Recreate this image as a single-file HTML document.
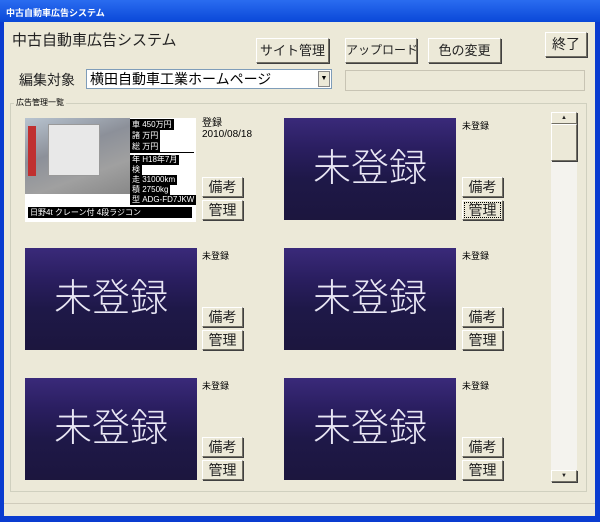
<!DOCTYPE html><html><head><meta charset="utf-8"><style>
*{margin:0;padding:0;box-sizing:border-box}
body{width:600px;height:522px;background:#0a3cd0;position:relative;overflow:hidden;font-family:"Liberation Sans","Noto Sans CJK JP",sans-serif;color:#000}
.a{position:absolute}
.title{left:0;top:0;width:600px;height:22px;background:linear-gradient(#2a6cf0,#0a48d8);color:#fff;font-size:9px;padding:6px 6px;font-weight:bold}
.client{left:4px;top:22px;width:591px;height:494px;background:#ece9d8}
.btn{position:absolute;background:#ece9d8;border:1px solid;border-color:#fff #716f64 #716f64 #fff;box-shadow:1px 1px 0 #404040;font-size:14px;text-align:center;line-height:18px;white-space:nowrap;color:#222}
.img{position:absolute;background:linear-gradient(#3a2a7a 0%,#2a1e60 30%,#1e1848 60%,#1c163e 100%);color:#e8e6f4;font-size:38px;font-weight:300;text-align:center;line-height:102px}
.lbl{position:absolute;font-size:10px}
.sb{position:absolute;font-size:8px;line-height:11px;white-space:nowrap}
.blk{background:#000;color:#fff;display:inline-block;padding:0 2px}
</style></head><body>
<div class="a title">中古自動車広告システム</div>
<div class="a client"></div>
<div class="a" style="left:12px;top:29px;font-size:15px;color:#222">中古自動車広告システム</div>
<div class="btn" style="left:256px;top:38px;width:73px;height:25px;line-height:23px;font-size:13px">サイト管理</div>
<div class="btn" style="left:345px;top:38px;width:72px;height:25px;line-height:23px;font-size:12px">アップロード</div>
<div class="btn" style="left:428px;top:38px;width:73px;height:25px;line-height:23px;font-size:13px">色の変更</div>
<div class="btn" style="left:545px;top:32px;width:42px;height:25px;line-height:23px">終了</div>
<div class="a" style="left:19px;top:70px;font-size:14px;color:#222">編集対象</div>
<div class="a" style="left:86px;top:69px;width:246px;height:20px;background:#fff;border:1px solid #7f9db9;font-size:14px;padding-left:3px;line-height:18px">横田自動車工業ホームページ</div>
<div class="a" style="left:318px;top:71px;width:12px;height:16px;background:#ece9d8;border:1px solid #888;font-size:7px;text-align:center;line-height:14px">▼</div>
<div class="a" style="left:345px;top:70px;width:240px;height:21px;border:1px solid #c8c4b4;background:#ece9d8"></div>
<div class="a" style="left:10px;top:103px;width:577px;height:389px;border:1px solid #d0d0bf"></div>
<div class="a" style="left:14px;top:97px;font-size:8px;background:#ece9d8;padding:0 2px">広告管理一覧</div>
<div class="a" style="left:25px;top:118px;width:171px;height:104px;background:#fff"></div>
<div class="a" style="left:25px;top:118px;width:105px;height:76px;background:linear-gradient(160deg,#b8c4d0,#8c9099 40%,#a0a0a0 70%,#888)"></div>
<div class="a" style="left:48px;top:124px;width:52px;height:52px;background:#e8e8e8;border:1px solid #999"></div>
<div class="a" style="left:28px;top:126px;width:8px;height:50px;background:#c03030"></div>
<div class="sb" style="left:130px;top:119px"><span class="blk">車 450万円</span><br><span class="blk">諸 万円</span><br><span class="blk">総 万円</span></div>
<div class="a" style="left:130px;top:152px;width:64px;height:1px;background:#000"></div>
<div class="sb" style="left:130px;top:155px;line-height:10px"><span class="blk">年 H18年7月</span><br><span class="blk">検 </span><br><span class="blk">走 31000km</span><br><span class="blk">積 2750kg</span><br><span class="blk">型 ADG-FD7JKW</span></div>
<div class="a sb" style="left:28px;top:207px;width:164px;background:#000;color:#fff;padding-left:2px">日野4t クレーン付 4段ラジコン</div>
<div class="lbl" style="left:202px;top:118px;line-height:11px">登録<br>2010/08/18</div>
<div class="btn" style="left:202px;top:177px;width:41px;height:20px">備考</div>
<div class="btn" style="left:202px;top:200px;width:41px;height:20px">管理</div>
<div class="img" style="left:284px;top:118px;width:172px;height:102px">未登録</div>
<div class="lbl" style="left:462px;top:119px;font-size:9px">未登録</div>
<div class="btn" style="left:462px;top:177px;width:41px;height:20px">備考</div>
<div class="btn" style="left:462px;top:200px;width:41px;height:20px;outline:1px dotted #000;outline-offset:-3px">管理</div>
<div class="img" style="left:25px;top:248px;width:172px;height:102px">未登録</div>
<div class="lbl" style="left:202px;top:249px;font-size:9px">未登録</div>
<div class="btn" style="left:202px;top:307px;width:41px;height:20px">備考</div>
<div class="btn" style="left:202px;top:330px;width:41px;height:20px">管理</div>
<div class="img" style="left:284px;top:248px;width:172px;height:102px">未登録</div>
<div class="lbl" style="left:462px;top:249px;font-size:9px">未登録</div>
<div class="btn" style="left:462px;top:307px;width:41px;height:20px">備考</div>
<div class="btn" style="left:462px;top:330px;width:41px;height:20px">管理</div>
<div class="img" style="left:25px;top:378px;width:172px;height:102px">未登録</div>
<div class="lbl" style="left:202px;top:379px;font-size:9px">未登録</div>
<div class="btn" style="left:202px;top:437px;width:41px;height:20px">備考</div>
<div class="btn" style="left:202px;top:460px;width:41px;height:20px">管理</div>
<div class="img" style="left:284px;top:378px;width:172px;height:102px">未登録</div>
<div class="lbl" style="left:462px;top:379px;font-size:9px">未登録</div>
<div class="btn" style="left:462px;top:437px;width:41px;height:20px">備考</div>
<div class="btn" style="left:462px;top:460px;width:41px;height:20px">管理</div>
<div class="a" style="left:551px;top:112px;width:26px;height:370px;background:#f4f3ee"></div>
<div class="btn" style="left:551px;top:112px;width:26px;height:12px;font-size:6px;line-height:10px">▲</div>
<div class="btn" style="left:551px;top:124px;width:26px;height:37px"></div>
<div class="btn" style="left:551px;top:470px;width:26px;height:12px;font-size:6px;line-height:10px">▼</div>
<div class="a" style="left:4px;top:503px;width:591px;height:1px;background:#d0ccbc"></div>
</body></html>
